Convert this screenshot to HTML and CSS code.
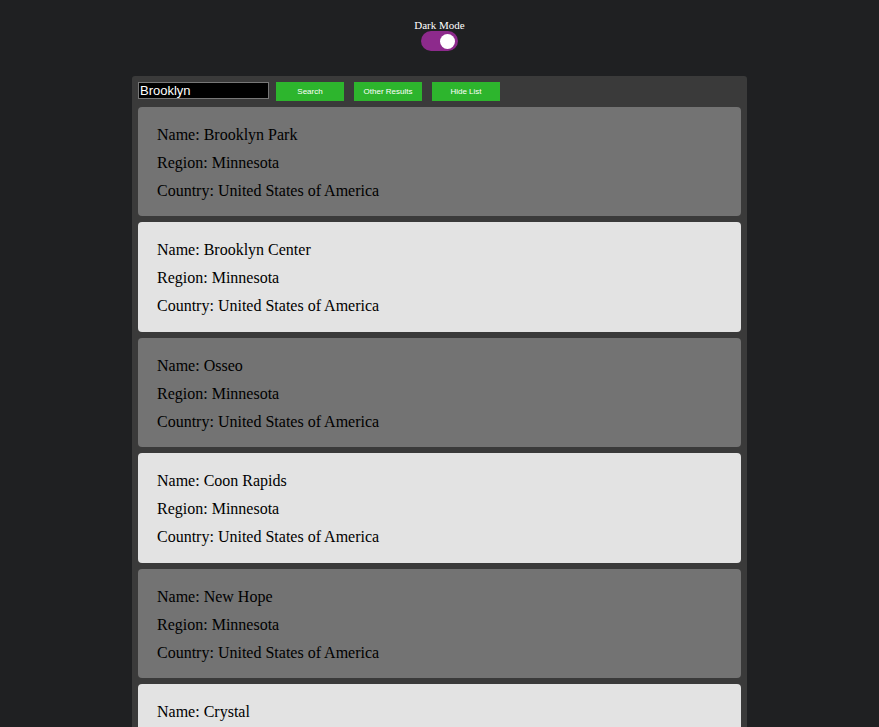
FILE: index.html
```html
<!DOCTYPE html>
<html lang="en">
<head>
    <meta charset="UTF-8">
    <meta name="viewport" content="width=device-width, initial-scale=1.0">
    <title>City Search</title>
    <link rel="stylesheet" href="styles.css">
</head>
<body>
    <div class="mode">
        <label for="dark-mode">Dark Mode</label>
        <span class="switch" id="dark-mode"><span class="knob"></span></span>
    </div>
    <div class="container">
        <div class="search-bar">
            <input type="text" id="search" value="Brooklyn">
            <button type="button">Search</button>
            <button type="button">Other Results</button>
            <button type="button">Hide List</button>
        </div>
        <div class="results">
            <div class="card dark">
                <p>Name: Brooklyn Park</p>
                <p>Region: Minnesota</p>
                <p>Country: United States of America</p>
            </div>
            <div class="card light">
                <p>Name: Brooklyn Center</p>
                <p>Region: Minnesota</p>
                <p>Country: United States of America</p>
            </div>
            <div class="card dark">
                <p>Name: Osseo</p>
                <p>Region: Minnesota</p>
                <p>Country: United States of America</p>
            </div>
            <div class="card light">
                <p>Name: Coon Rapids</p>
                <p>Region: Minnesota</p>
                <p>Country: United States of America</p>
            </div>
            <div class="card dark">
                <p>Name: New Hope</p>
                <p>Region: Minnesota</p>
                <p>Country: United States of America</p>
            </div>
            <div class="card light">
                <p>Name: Crystal</p>
                <p>Region: Minnesota</p>
                <p>Country: United States of America</p>
            </div>
        </div>
    </div>
</body>
</html>
```

FILE: styles.css
```css
body {
    margin: 0;
    background-color: #1f2022;
    font-family: "Liberation Serif", "Times New Roman", serif;
}
.mode {
    display: flex;
    flex-direction: column;
    align-items: center;
    padding-top: 19px;
}
.mode label {
    color: white;
    font-size: 11px;
    line-height: 12px;
}
.switch {
    display: flex;
    align-items: center;
    justify-content: flex-end;
    width: 37px;
    height: 20px;
    padding: 0 3px;
    box-sizing: border-box;
    border-radius: 10px;
    background-color: #8d2a8c;
}
.knob {
    width: 15px;
    height: 15px;
    border-radius: 50%;
    background-color: white;
}
.container {
    width: 615px;
    margin: 25px auto 0;
    padding: 6px;
    box-sizing: border-box;
    background-color: #3a3a3a;
    border-radius: 3px;
}
.search-bar {
    display: flex;
    align-items: flex-start;
    height: 19px;
    margin-bottom: 6px;
}
.search-bar input {
    width: 131px;
    height: 17px;
    box-sizing: border-box;
    margin: 0 7px 0 0;
    padding: 0 1px;
    background-color: black;
    color: white;
    border: 1px solid #777;
    font-family: "Liberation Sans", Arial, sans-serif;
    font-size: 13px;
}
.search-bar button {
    width: 68px;
    height: 19px;
    margin-right: 10px;
    padding: 0;
    border: none;
    background-color: #2db52d;
    color: white;
    font-family: "Liberation Sans", Arial, sans-serif;
    font-size: 8px;
}
.results {
    display: flex;
    flex-direction: column;
    gap: 6px;
}
.card {
    padding: 9px 19px 6.4px;
    border-radius: 4px;
}
.card p {
    margin: 10px 0;
    font-size: 16px;
    line-height: 18px;
    color: black;
}
.dark {
    background-color: #737373;
}
.light {
    background-color: #e3e3e3;
}
```
